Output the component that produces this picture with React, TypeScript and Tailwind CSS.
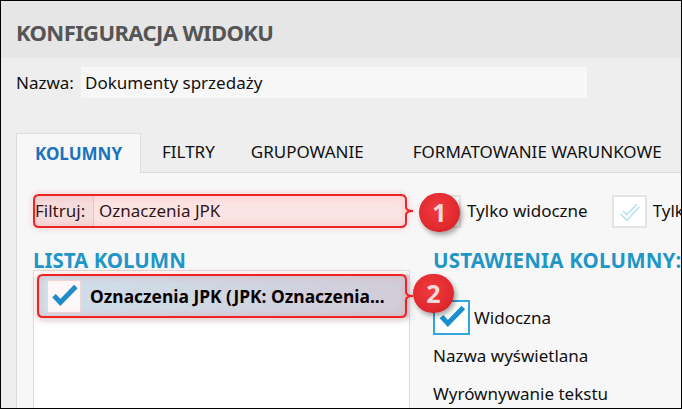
import React from "react";

const font = { fontFamily: '"Noto Sans", "Open Sans", sans-serif' };

function Check({ hollow = false }: { hollow?: boolean }) {
  if (hollow) {
    return (
      <svg viewBox="0 0 34 34" className="w-full h-full">
        <path d="M8 18 L14 24 L27 10" fill="none" stroke="#a9def2" strokeWidth="6" />
        <path d="M8 18 L14 24 L27 10" fill="none" stroke="#ffffff" strokeWidth="3" />
      </svg>
    );
  }
  return (
    <svg viewBox="0 0 34 34" className="w-full h-full">
      <path d="M6 16 L13 23.5 L30 6" fill="none" stroke="#1a8fd0" strokeWidth="5.5" />
    </svg>
  );
}

function Badge({ n }: { n: string }) {
  return (
    <div className="w-[41px] h-[39px] rounded-full bg-[radial-gradient(circle_at_45%_40%,#ee3b3f_0%,#e22a2f_60%,#b81d22_100%)] shadow-[2px_3px_5px_rgba(0,0,0,0.35)] flex items-center justify-center text-[#f6dada] text-[25px] font-bold leading-none">
      {n}
    </div>
  );
}

function Callout({ w, h, fill }: { w: number; h: number; fill: string }) {
  const m = h / 2;
  const r = 5;
  const x = w - 8;
  return (
    <svg
      width={w}
      height={h}
      className="absolute left-0 top-0 pointer-events-none overflow-visible drop-shadow-[0_0_3px_rgba(255,40,40,0.35)]"
    >
      <path
        d={`M${r + 1} 1 H${x - r} Q${x} 1 ${x} ${r + 1} V${m - 4} Q${x} ${m} ${w - 1} ${m} Q${x} ${m} ${x} ${m + 4} V${h - r - 1} Q${x} ${h - 1} ${x - r} ${h - 1} H${r + 1} Q1 ${h - 1} 1 ${h - r - 1} V${r + 1} Q1 1 ${r + 1} 1 Z`}
        fill={fill}
        stroke="#ee2424"
        strokeWidth="2"
      />
    </svg>
  );
}

export default function App() {
  return (
    <div
      style={font}
      className="w-[682px] h-[409px] border border-black bg-[#eeeeee] overflow-hidden flex flex-col text-[17px] text-[#111]"
    >
      <div className="h-[57px] shrink-0 bg-[#e6e6e6] px-[15px] pt-[5px] flex items-center">
        <h1 className="text-[22px] font-bold text-[#555] tracking-[-0.6px]">KONFIGURACJA WIDOKU</h1>
      </div>

      <div className="flex items-center mt-[9px] pl-[15px] h-[31px]">
        <span className="w-[65px]">Nazwa:</span>
        <div className="w-[506px] h-[31px] bg-[#f7f7f7] flex items-center pl-[4px]">Dokumenty sprzedaży</div>
      </div>

      <div className="flex mt-[34px] pl-[15px] h-[40px] items-end whitespace-nowrap">
        <div className="shrink-0 h-[40px] w-[125px] bg-[#f7f7f7] border border-b-0 border-[#dcdcdc] flex items-center justify-center text-[#1b72bd] font-bold text-[17px] relative top-[1px]">
          KOLUMNY
        </div>
        <div className="shrink-0 h-[40px] pl-[21px] pr-[19px] flex items-center">FILTRY</div>
        <div className="shrink-0 h-[40px] pl-[17px] pr-[24px] flex items-center">GRUPOWANIE</div>
        <div className="shrink-0 h-[40px] pl-[25px] flex items-center">FORMATOWANIE WARUNKOWE</div>
      </div>

      <div className="ml-[15px] flex-1 bg-[#f7f7f7] border-l border-t border-[#dcdcdc] pl-[16px] pt-[21px] overflow-hidden">
        <div className="flex items-center h-[34px] whitespace-nowrap">
          <div className="relative shrink-0 w-[381px] h-[34px] flex items-center">
            <span className="pl-[2px] w-[60px]">Filtruj:</span>
            <div className="flex-1 h-[32px] mr-[6px] border-l border-[#e2e2e2] bg-white flex items-center pl-[5px]">
              Oznaczenia JPK
            </div>
            <Callout w={381} h={34} fill="rgba(232,60,60,0.11)" />
          </div>
          <div className="relative shrink-0 w-[34px] h-[33px] ml-[13px] border-2 border-[#e2e2e2] bg-white">
            <div className="absolute -left-[10px] -top-[4px]">
              <Badge n="1" />
            </div>
          </div>
          <span className="shrink-0 ml-[6px]">Tylko widoczne</span>
          <div className="shrink-0 w-[35px] h-[33px] ml-[24px] border-2 border-[#e4e4e4] bg-white">
            <Check hollow />
          </div>
          <span className="shrink-0 ml-[6px]">Tylko</span>
        </div>

        <div className="flex mt-[20px] h-[400px]">
          <div className="w-[377px] shrink-0 flex flex-col">
            <h2 className="text-[20.5px] font-bold text-[#1f96c6] leading-[24px] h-[22px]">LISTA KOLUMN</h2>
            <div className="flex-1 bg-white border border-[#dcdcdc] p-[3px]">
              <div className="relative h-[44px] w-[373px] rounded-[4px] bg-[linear-gradient(90deg,#cfe6f3_0%,#d0dde9_50%,#d1d3df_100%)] shadow-[0_3px_6px_rgba(0,0,0,0.12)] flex items-center">
                <div className="w-[34px] h-[33px] ml-[10px] bg-white border border-[#f0dede]">
                  <Check />
                </div>
                <span className="ml-[9px] font-bold text-[17.4px] text-black whitespace-nowrap">
                  Oznaczenia JPK (JPK: Oznaczenia...
                </span>
                <Callout w={377} h={44} fill="rgba(232,60,60,0.03)" />
              </div>
            </div>
          </div>
          <div className="ml-[23px] shrink-0 flex flex-col whitespace-nowrap relative">
            <h2 className="text-[20.5px] font-bold text-[#1f96c6] leading-[24px] h-[22px] tracking-[0.2px]">
              USTAWIENIA KOLUMNY:
            </h2>
            <div className="absolute -left-[20px] top-[26px]">
              <Badge n="2" />
            </div>
            <div className="flex items-center mt-[30px]">
              <div className="w-[37px] h-[35px] border-2 border-[#33a6dc] bg-white">
                <Check />
              </div>
              <span className="ml-[4px]">Widoczna</span>
            </div>
            <div className="mt-[7px] h-[28px] flex items-center">Nazwa wyświetlana</div>
            <div className="mt-[10px] h-[28px] flex items-center">Wyrównywanie tekstu</div>
          </div>
        </div>
      </div>
    </div>
  );
}
